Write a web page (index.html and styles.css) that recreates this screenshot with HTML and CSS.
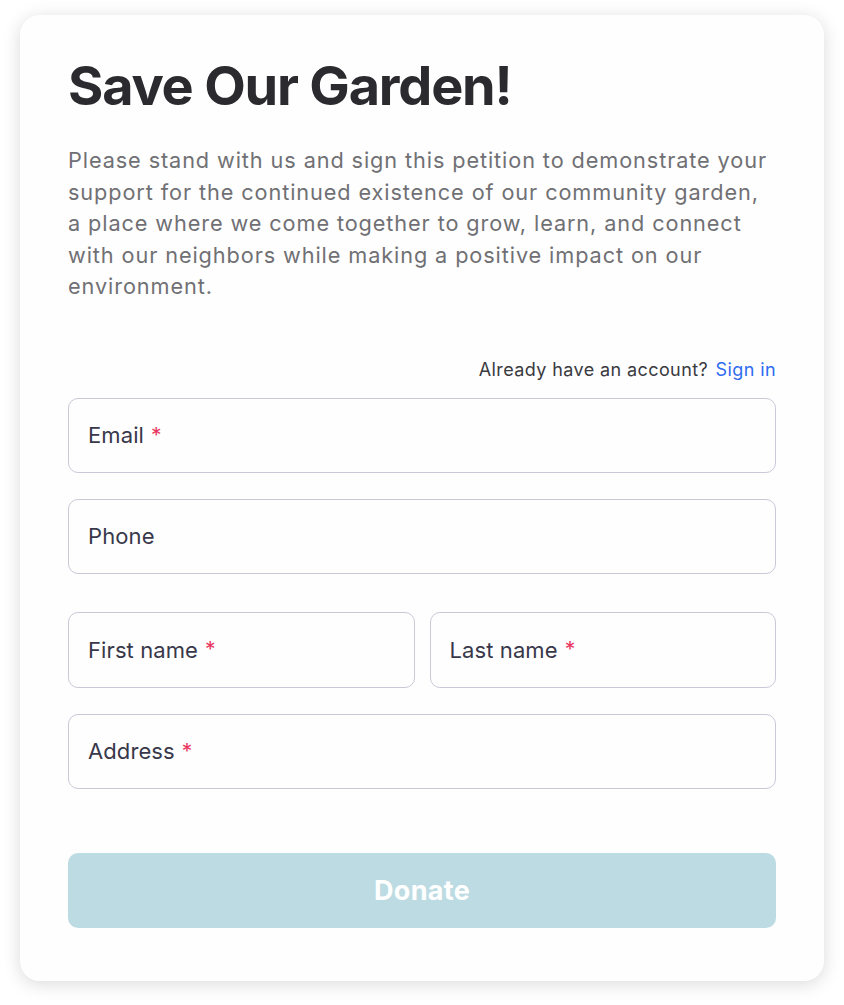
FILE: index.html
```html
<!DOCTYPE html>
<html lang="en">
<head>
<meta charset="utf-8">
<title>Save Our Garden!</title>
<link rel="stylesheet" href="styles.css">
</head>
<body>
<main class="card">
  <h1 class="title">Save Our Garden!</h1>
  <p class="intro">Please stand with us and sign this petition to demonstrate your support for the continued existence of our community garden, a place where we come together to grow, learn, and connect with our neighbors while making a positive impact on our environment.</p>
  <form class="form">
    <div class="account">Already have an account? <a class="signin" href="#">Sign in</a></div>
    <div class="field field-email"><span class="label">Email</span><span class="req">*</span></div>
    <div class="field field-phone"><span class="label">Phone</span></div>
    <div class="row">
      <div class="field"><span class="label">First name</span><span class="req">*</span></div>
      <div class="field"><span class="label">Last name</span><span class="req">*</span></div>
    </div>
    <div class="field field-address"><span class="label">Address</span><span class="req">*</span></div>
    <button type="button" class="donate">Donate</button>
  </form>
</main>
</body>
</html>
```

FILE: styles.css
```css
* { box-sizing: border-box; }
html, body { margin: 0; padding: 0; background: #ffffff; }
body {
  font-family: Inter, "Open Sans", "Liberation Sans", sans-serif;
  padding: 15px 20px 24px 20px;
}
.card {
  width: 804px;
  background: #fefefe;
  border-radius: 20px;
  box-shadow: 0 3px 18px rgba(0,0,0,0.15);
  padding: 43px 48px 53px 48px;
}
.title {
  margin: 0;
  font-size: 54px;
  line-height: 56px;
  font-weight: 700;
  color: #2b2a2e;
  letter-spacing: -1.2px;
}
.intro {
  margin: 31px 0 0 0;
  font-size: 21.7px;
  line-height: 31.5px;
  color: #707074;
  letter-spacing: 0.9px;
}
.form {
  margin-top: 56px;
  display: flex;
  flex-direction: column;
}
.account {
  text-align: right;
  font-size: 18px;
  line-height: 22px;
  color: #3a3a40;
  letter-spacing: 0.4px;
  margin-bottom: 17px;
}
.signin { color: #2f6bf0; text-decoration: none; margin-left: 2px; }
.field {
  height: 75px;
  border: 1px solid #cac9d8;
  border-radius: 10px;
  display: flex;
  align-items: center;
  padding: 0 19px;
  font-size: 22px;
  letter-spacing: 0.1px;
  color: #38384a;
}
.field-phone { margin-top: 26px; }
.row {
  margin-top: 38px;
  display: grid;
  grid-template-columns: 1fr 1fr;
  gap: 15px;
}
.row .field { height: 76px; }
.field-address { margin-top: 26px; }
.req { color: #e8345f; margin-left: 7px; font-size: 21px; }
.donate {
  margin-top: 64px;
  height: 75px;
  border: none;
  border-radius: 10px;
  background: #bddbe2;
  color: #ffffff;
  font-family: inherit;
  font-size: 27px;
  font-weight: 700;
  letter-spacing: 0.3px;
}
```
